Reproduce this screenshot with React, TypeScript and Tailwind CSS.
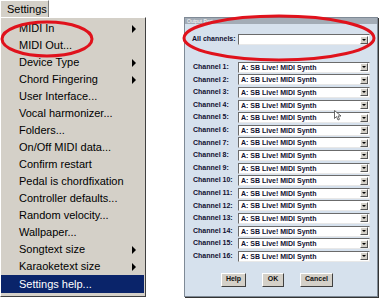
import React from 'react';

const menuItems: { label: string; sub?: boolean }[] = [
  { label: 'MIDI In', sub: true },
  { label: 'MIDI Out...' },
  { label: 'Device Type', sub: true },
  { label: 'Chord Fingering', sub: true },
  { label: 'User Interface...' },
  { label: 'Vocal harmonizer...' },
  { label: 'Folders...' },
  { label: 'On/Off MIDI data...' },
  { label: 'Confirm restart' },
  { label: 'Pedal is chordfixation' },
  { label: 'Controller defaults...' },
  { label: 'Random velocity...' },
  { label: 'Wallpaper...' },
  { label: 'Songtext size', sub: true },
  { label: 'Karaoketext size', sub: true },
];

const channels = Array.from({ length: 16 }, (_, i) => i + 1);

function Combo({ value }: { value: string }) {
  return (
    <div className="flex h-[11px] w-[132px] items-center bg-white border border-t-[#6b6b6b] border-l-[#6b6b6b] border-r-[#e8e8e8] border-b-[#e8e8e8]">
      <span className="flex-1 pl-[2px] text-[7px] font-bold leading-none text-[#101030]">{value}</span>
      <span className="mr-[1px] flex h-[8px] w-[8px] items-center justify-center bg-[#d4d0c8] border border-t-white border-l-white border-r-[#555] border-b-[#555]">
        <span className="h-0 w-0 border-x-[2px] border-t-[2px] border-x-transparent border-t-black" />
      </span>
    </div>
  );
}

function Btn({ label, w }: { label: string; w: string }) {
  return (
    <div
      className={`${w} flex h-[14px] items-center justify-center bg-[#d4d0c8] border border-t-white border-l-white border-r-[#404040] border-b-[#404040] text-[7px] font-bold text-[#111]`}
    >
      {label}
    </div>
  );
}

export default function App() {
  return (
    <div
      className="relative h-[301px] w-[381px] overflow-hidden bg-white"
      style={{ fontFamily: "'Liberation Sans', Arial, sans-serif" }}
    >
      <div className="flex">
        {/* Settings menu */}
        <div className="w-[146px]">
          <div className="flex h-[17px] w-[49px] items-center bg-[#d4d0c8] border border-b-0 border-t-white border-l-white border-r-[#808080] pl-[6px] text-[11px] text-black">
            Settings
          </div>
          <div className="h-[280px] bg-[#d4d0c8] border border-t-white border-l-white border-r-[#404040] border-b-[#404040] pt-[2px] pr-[1px]">
            {menuItems.map((it) => (
              <div key={it.label} className="flex h-[17px] items-center pl-[18px] pr-[8px] text-[11px] text-black">
                <span className="flex-1">{it.label}</span>
                {it.sub && <span className="h-0 w-0 border-y-[4px] border-l-[4px] border-y-transparent border-l-black" />}
              </div>
            ))}
            <div className="flex h-[18px] items-center bg-[#0a246a] pl-[18px] text-[11px] text-white">Settings help...</div>
          </div>
        </div>

        {/* Output port dialog */}
        <div className="ml-[38px] mt-[17px] flex h-[280px] w-[194px] flex-col border border-[#7f8a96] bg-[#d6e1ed] shadow-[1px_1px_0_#333]">
          <div className="flex h-[6px] items-center bg-[#a3acb6] pl-[2px] text-[5px] leading-none text-white">Output Port</div>
          <div className="flex items-center pl-[7px] pt-[10px]">
            <span className="w-[46px] text-[7px] font-bold text-[#101030]">All channels:</span>
            <Combo value="" />
          </div>
          <div className="mt-[16px] flex flex-col">
            {channels.map((c) => (
              <div key={c} className="flex h-[12.6px] items-center pl-[8px]">
                <span className="w-[45px] text-[7px] font-bold text-[#101030]">Channel {c}:</span>
                <Combo value="A: SB Live! MIDI Synth" />
              </div>
            ))}
          </div>
          <div className="mt-[10px] flex gap-[16px] pl-[36px]">
            <Btn label="Help" w="w-[25px]" />
            <Btn label="OK" w="w-[22px]" />
            <Btn label="Cancel" w="w-[33px]" />
          </div>
        </div>
      </div>

      {/* mouse cursor */}
      <svg className="absolute left-[334px] top-[110px]" width="8" height="11" viewBox="0 0 8 11">
        <path d="M0.5 0.5 L0.5 8.5 L2.5 6.5 L4 10 L5.5 9.3 L4 6 L7 6 Z" fill="white" stroke="#444" strokeWidth="0.8" />
      </svg>

      {/* red annotation rings */}
      <svg className="pointer-events-none absolute left-0 top-0" width="381" height="301">
        <ellipse cx="47" cy="39" rx="45" ry="17" fill="none" stroke="#e0121c" strokeWidth="3" />
        <ellipse cx="279" cy="38" rx="95" ry="22" fill="none" stroke="#e0121c" strokeWidth="3" />
      </svg>
    </div>
  );
}
